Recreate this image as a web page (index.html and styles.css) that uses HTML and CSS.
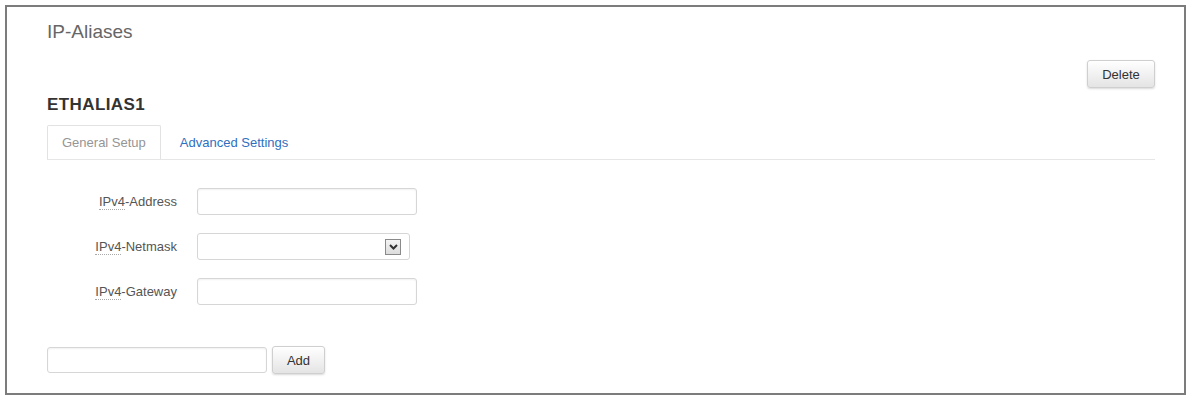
FILE: index.html
```html
<!DOCTYPE html>
<html>
<head>
<meta charset="utf-8">
<link rel="stylesheet" href="styles.css">
</head>
<body>
<div class="frame">
  <h2 class="title">IP-Aliases</h2>
  <div class="actions"><button class="btn btn-delete">Delete</button></div>
  <h3 class="name">ETHALIAS1</h3>
  <ul class="tabs">
    <li class="tab active">General Setup</li>
    <li class="tab link">Advanced Settings</li>
  </ul>
  <div class="form">
    <div class="row">
      <label class="lbl"><abbr>IPv4</abbr>-Address</label>
      <input class="field" type="text">
    </div>
    <div class="row">
      <label class="lbl"><abbr>IPv4</abbr>-Netmask</label>
      <div class="select"><span class="arrow"><svg width="11" height="8" viewBox="0 0 11 8"><path d="M2 2 L5.5 5.5 L9 2" fill="none" stroke="#333" stroke-width="2"/></svg></span></div>
    </div>
    <div class="row">
      <label class="lbl"><abbr>IPv4</abbr>-Gateway</label>
      <input class="field" type="text">
    </div>
  </div>
  <div class="add-row">
    <input class="field" type="text">
    <button class="btn btn-add">Add</button>
  </div>
</div>
</body>
</html>
```
FILE: styles.css
```css
* { box-sizing: border-box; }
html, body { margin: 0; padding: 0; background: #fff; }
body { font-family: "Liberation Sans", Arial, sans-serif; }
.frame {
  margin: 5px 0 0 5px;
  width: 1181px;
  height: 390px;
  border: 2px solid #7c7c7c;
  padding: 14px 29px 0 40px;
}
.title {
  margin: 0;
  font-size: 19px;
  line-height: 22px;
  font-weight: normal;
  color: #666;
}
.actions {
  display: flex;
  justify-content: flex-end;
  margin-top: 17px;
}
.btn {
  font-family: "Liberation Sans", Arial, sans-serif;
  font-size: 13px;
  color: #333;
  background: linear-gradient(#ffffff, #e4e4e4);
  border: 1px solid #cfcfcf;
  border-radius: 3px;
  box-shadow: 0 1px 2px rgba(0,0,0,0.15);
  padding: 0;
}
.btn-delete { width: 68px; height: 28px; }
.name {
  margin: 7px 0 0 0;
  font-size: 17px;
  line-height: 20px;
  letter-spacing: 0.4px;
  font-weight: bold;
  color: #333;
}
.tabs {
  list-style: none;
  margin: 10px 0 0 0;
  padding: 0;
  display: flex;
  border-bottom: 1px solid #e6e6e6;
  height: 35px;
}
.tab {
  font-size: 13px;
  line-height: 16px;
  padding: 9px 14px 0 14px;
  height: 34px;
  white-space: nowrap;
}
.tab.active {
  border: 1px solid #e2e2e2;
  border-bottom: none;
  border-radius: 2px 2px 0 0;
  color: #959595;
}
.tab.link {
  color: #2f6fc0;
  margin-left: 5px;
  padding-top: 10px;
}
.form {
  margin-top: 28px;
  display: flex;
  flex-direction: column;
  gap: 18px;
}
.row {
  display: flex;
  align-items: center;
  gap: 20px;
  height: 27px;
}
.lbl {
  width: 130px;
  text-align: right;
  font-size: 13px;
  color: #555;
}
abbr {
  text-decoration: none;
  border-bottom: 1px dotted #aaa;
}
.field {
  width: 220px;
  height: 27px;
  border: 1px solid #d6d6d6;
  border-radius: 3px;
  box-shadow: inset 0 1px 2px rgba(0,0,0,0.06);
  background: #fff;
  margin: 0;
}
.select {
  width: 213px;
  height: 27px;
  border: 1px solid #d6d6d6;
  border-radius: 3px;
  display: flex;
  align-items: center;
  justify-content: flex-end;
  padding-right: 8px;
}
.arrow {
  width: 16px;
  height: 16px;
  border: 1px solid #8a8a8a;
  background: linear-gradient(#f4f4f4, #dcdcdc);
  display: flex;
  align-items: center;
  justify-content: center;
}
.add-row {
  margin-top: 41px;
  display: flex;
  align-items: center;
  gap: 5px;
}
.add-row .field { height: 26px; }
.btn-add { width: 53px; height: 28px; }
```
